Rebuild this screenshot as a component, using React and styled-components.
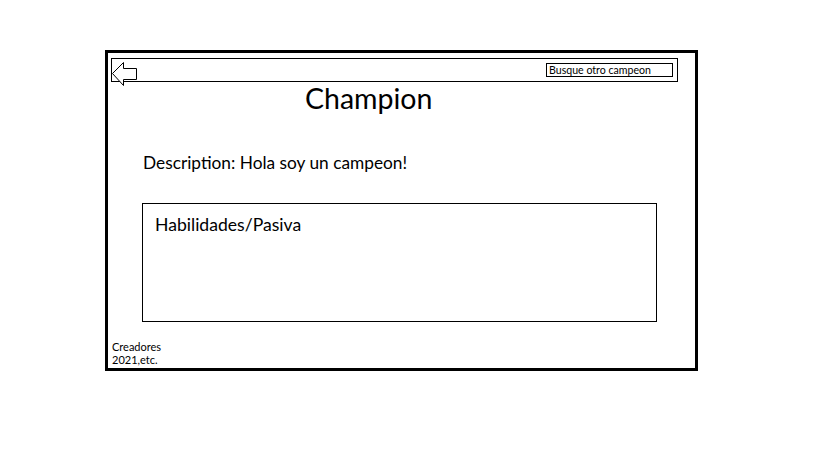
import styled, { createGlobalStyle } from "styled-components";

const GlobalStyle = createGlobalStyle`
  body {
    margin: 0;
    background: #fff;
    font-family: Lato, "Open Sans", sans-serif;
    color: #000;
  }
  * { box-sizing: border-box; }
`;

const Frame = styled.div`
  margin: 50px 0 0 105px;
  width: 593px;
  height: 321px;
  border: 3px solid #000;
  display: flex;
  flex-direction: column;
  padding: 5px 17px 0 3px;
`;

const TopBar = styled.div`
  height: 24px;
  border: 1px solid #000;
  display: flex;
  justify-content: space-between;
  align-items: flex-start;
  padding: 4px 4px 0 0;
  overflow: visible;
`;

const BackArrow = styled.svg`
  width: 26px;
  height: 24px;
  margin-top: -1px;
  overflow: visible;
`;

const Search = styled.div`
  width: 127px;
  height: 14px;
  border: 1px solid #000;
  font-size: 10.6px;
  line-height: 12px;
  padding-left: 2px;
  white-space: nowrap;
`;

const Title = styled.h1`
  margin: 0;
  padding-left: 194px;
  font-size: 28.5px;
  font-weight: 400;
  line-height: 32px;
`;

const Description = styled.p`
  margin: 38px 0 0 32px;
  font-size: 17.3px;
  line-height: 22px;
`;

const SkillsBox = styled.div`
  margin: 29px 0 0 31px;
  width: 515px;
  height: 119px;
  border: 1px solid #000;
  padding: 10px 12px;
  font-size: 17.6px;
  line-height: 22px;
`;

const Footer = styled.div`
  margin: 18px 0 0 1px;
  font-size: 11px;
  line-height: 13px;
`;

const App = () => {
  return (
    <>
      <GlobalStyle />
      <Frame>
        <TopBar>
          <BackArrow viewBox="0 0 26 24">
            <path
              d="M0.5 11.5 L11.5 0.5 L11.5 6.5 L24.5 6.5 L24.5 17.5 L11.5 17.5 L11.5 23.5 Z"
              fill="#fff"
              stroke="#000"
              strokeWidth="1"
            />
          </BackArrow>
          <Search>Busque otro campeon</Search>
        </TopBar>
        <Title>Champion</Title>
        <Description>Description: Hola soy un campeon!</Description>
        <SkillsBox>Habilidades/Pasiva</SkillsBox>
        <Footer>
          Creadores
          <br />
          2021,etc.
        </Footer>
      </Frame>
    </>
  );
};

export default App;
